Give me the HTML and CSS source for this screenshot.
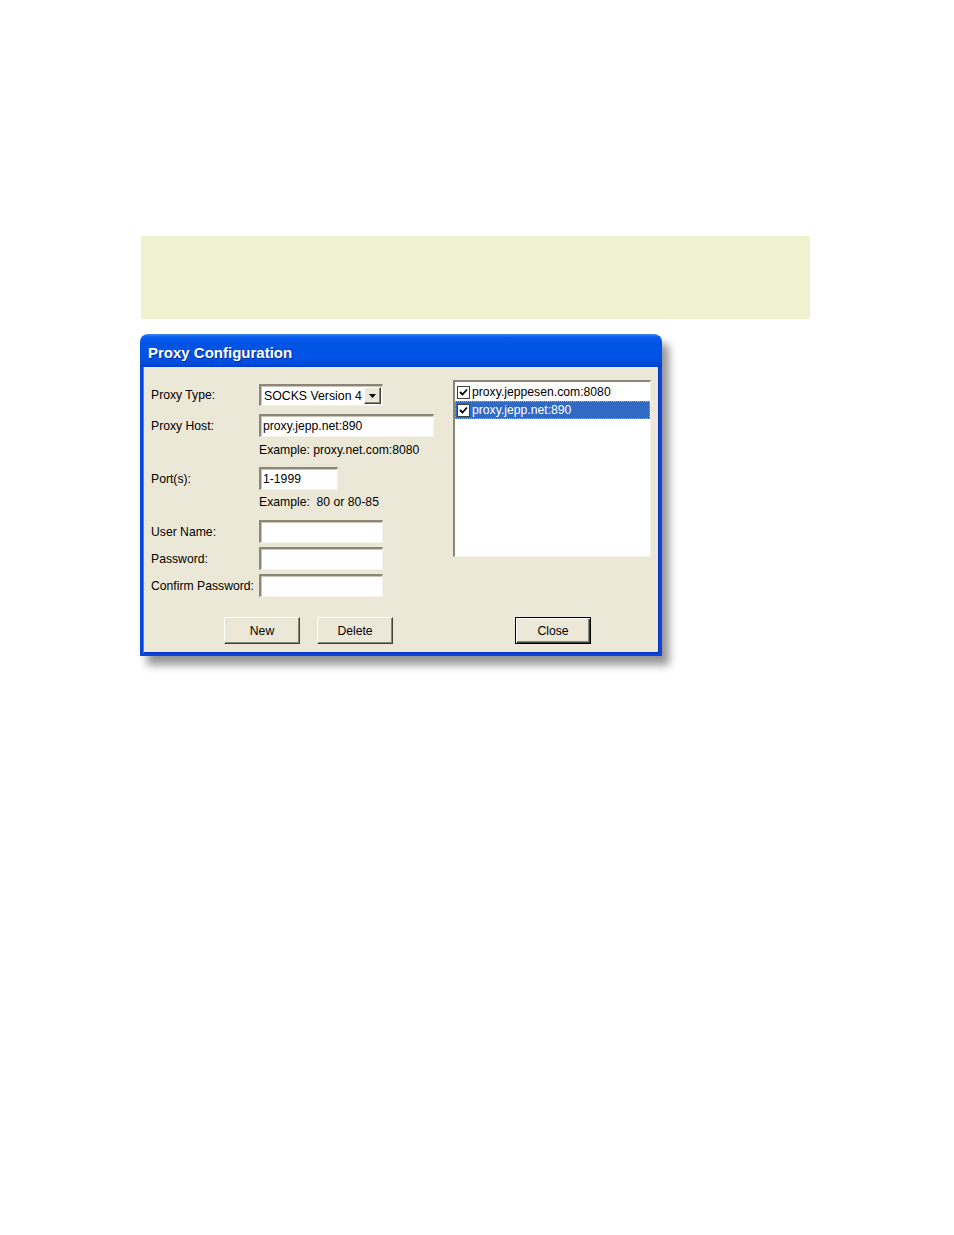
FILE: index.html
```html
<!DOCTYPE html>
<html>
<head>
<meta charset="utf-8">
<link rel="stylesheet" href="styles.css">
</head>
<body>
<div class="note"></div>
<div class="dialog">
  <div class="titlebar"><span class="title">Proxy Configuration</span></div>
  <div class="body">
    <div class="main">
      <div class="form">
        <div class="row r1"><span class="label">Proxy Type:</span>
          <div class="select"><span class="sel-text">SOCKS Version 4</span><span class="drop"><svg width="7" height="4" viewBox="0 0 7 4"><path d="M0 0h7L3.5 4z" fill="#000"/></svg></span></div>
        </div>
        <div class="row r2"><span class="label">Proxy Host:</span><div class="field w-host">proxy.jepp.net:890</div></div>
        <div class="row hint h1"><span class="label"></span><span>Example: proxy.net.com:8080</span></div>
        <div class="row r4"><span class="label">Port(s):</span><div class="field w-port">1-1999</div></div>
        <div class="row hint h2"><span class="label"></span><span>Example:&nbsp; 80 or 80-85</span></div>
        <div class="row r6"><span class="label">User Name:</span><div class="field w-user"></div></div>
        <div class="row r7"><span class="label">Password:</span><div class="field w-user"></div></div>
        <div class="row r7"><span class="label">Confirm Password:</span><div class="field w-user"></div></div>
      </div>
      <div class="listbox">
        <div class="item"><span class="check"><svg width="9" height="9" viewBox="0 0 9 9"><path d="M1 4l2.5 2.5L8 1.5" fill="none" stroke="#000" stroke-width="1.8"/></svg></span><span>proxy.jeppesen.com:8080</span></div>
        <div class="item selected"><span class="check"><svg width="9" height="9" viewBox="0 0 9 9"><path d="M1 4l2.5 2.5L8 1.5" fill="none" stroke="#000" stroke-width="1.8"/></svg></span><span>proxy.jepp.net:890</span></div>
      </div>
    </div>
    <div class="buttons">
      <div class="btn">New</div>
      <div class="btn">Delete</div>
      <div class="btn default">Close</div>
    </div>
  </div>
</div>
</body>
</html>
```

FILE: styles.css
```css
html, body {
  margin: 0;
  padding: 0;
  background: #ffffff;
}
body {
  font-family: "Liberation Sans", Arial, sans-serif;
  font-size: 12.2px;
  color: #000;
  letter-spacing: 0;
  min-height: 100vh;
  padding-bottom: 1px;
  box-sizing: border-box;
}
.note {
  margin: 236px 0 0 141px;
  width: 669px;
  height: 83px;
  background: #eef2cf;
}
.dialog {
  position: relative;
  margin: 15px 0 0 140px;
  width: 522px;
  height: 322px;
  display: flex;
  flex-direction: column;
  border-radius: 8px 8px 0 0;
  box-shadow: 7px 9px 9px rgba(0, 0, 0, 0.42);
}
.titlebar {
  height: 33px;
  flex: none;
  border-radius: 8px 8px 0 0;
  background: linear-gradient(#3f8cf3 0px, #0a5cf0 3px, #0054e3 10px, #0152e6 24px, #004ad8 30px, #0040c8 33px);
  display: flex;
  align-items: center;
  padding-left: 8px;
}
.title {
  color: #fff;
  font-weight: bold;
  font-size: 15px;
  letter-spacing: 0;
  text-shadow: 1px 1px 0 #0a2a9a;
  margin-top: 4px;
}
.body {
  flex: 1;
  background: #ece8d8;
  border: 3px solid #0a46dc;
  border-top: none;
  box-shadow: inset 1px 0 0 #4a7ff0, inset -1px 0 0 #0832b8, inset 0 -1px 0 #0832b8;
  padding: 13px 8px 0 8px;
  box-sizing: border-box;
}
.main {
  display: flex;
  justify-content: space-between;
  height: 218px;
}
.form {
  display: flex;
  flex-direction: column;
}
.row {
  display: flex;
  align-items: center;
}
.label {
  width: 108px;
  flex: none;
}
.r1 { margin-top: 4px; }
.r2 { margin-top: 8px; }
.h1 { margin-top: 6px; height: 14px; }
.r4 { margin-top: 10px; }
.h2 { margin-top: 5px; height: 14px; }
.r6 { margin-top: 11px; }
.r7 { margin-top: 4px; }
.select, .field {
  box-sizing: border-box;
  height: 23px;
  background: #fff;
  border-top: 2px solid #8a877a;
  border-left: 2px solid #8a877a;
  border-bottom: 1px solid #f4f2ea;
  border-right: 1px solid #f4f2ea;
  box-shadow: inset 1px 1px 0 #c9c5b6;
  display: flex;
  align-items: center;
  padding-left: 2px;
}
.select {
  width: 124px;
  height: 22px;
  padding-left: 3px;
  justify-content: space-between;
}
.sel-text {
  font-size: 12.3px;
}
.drop {
  width: 17px;
  height: 17px;
  margin-right: 1px;
  box-sizing: border-box;
  background: #ece8d8;
  border-top: 1px solid #fff;
  border-left: 1px solid #fff;
  border-right: 1px solid #404040;
  border-bottom: 1px solid #404040;
  box-shadow: inset -1px -1px 0 #8a877a;
  display: flex;
  align-items: center;
  justify-content: center;
}
.w-host { width: 175px; }
.w-port { width: 79px; }
.w-user { width: 124px; }
.listbox {
  width: 198px;
  height: 177px;
  box-sizing: border-box;
  background: #fff;
  border-top: 2px solid #8a877a;
  border-left: 2px solid #8a877a;
  border-bottom: 1px solid #f4f2ea;
  border-right: 1px solid #f4f2ea;
  padding: 1px 0 0 0;
}
.item {
  height: 18px;
  display: flex;
  align-items: center;
  padding-left: 2px;
  box-sizing: border-box;
}
.item.selected {
  background: #316ac5;
  color: #fff;
  outline: 1px dotted #c9a860;
  outline-offset: -1px;
}
.check {
  width: 13px;
  height: 13px;
  box-sizing: border-box;
  background: #fff;
  border: 1px solid #404040;
  display: flex;
  align-items: center;
  justify-content: center;
  margin-right: 2px;
}
.buttons {
  display: flex;
  margin-top: 19px;
  padding-left: 73px;
}
.btn {
  width: 76px;
  height: 27px;
  box-sizing: border-box;
  background: #ece8d8;
  border-top: 1px solid #fff;
  border-left: 1px solid #fff;
  border-right: 1px solid #404040;
  border-bottom: 1px solid #404040;
  box-shadow: inset -1px -1px 0 #8a877a;
  display: flex;
  align-items: center;
  justify-content: center;
  margin-right: 17px;
}
.btn.default {
  margin-left: 105px;
  border: 1px solid #000;
  box-shadow: inset 1px 1px 0 #fff, inset -1px -1px 0 #404040, inset -2px -2px 0 #8a877a;
}
```
